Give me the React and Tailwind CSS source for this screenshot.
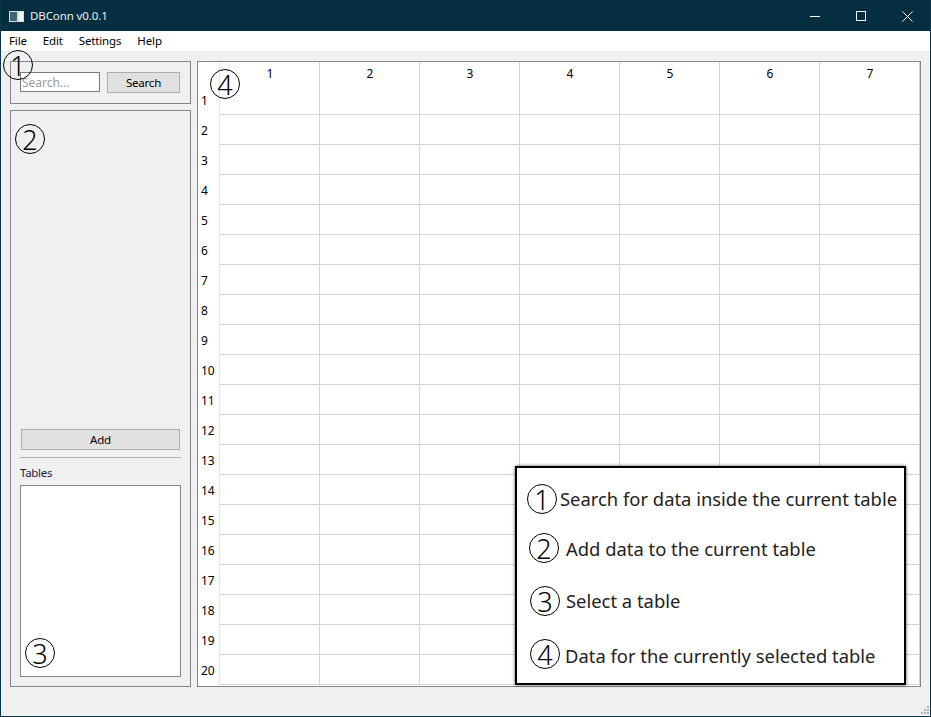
const font = { fontFamily: '"Noto Sans", "Open Sans", sans-serif' };

// Hand-drawn looking numbered circle used for the annotations over the window
function Marker({ className, children }) {
  return (
    <span className={`absolute w-[30px] h-[30px] rounded-full border-[1.5px] border-black flex items-center justify-center text-[27px] leading-none font-light text-black ${className}`}>
      {children}
    </span>
  );
}

function TitleBar() {
  return (
    <div className="h-[30px] flex items-center bg-[#052e40] text-[#e8eef1] shrink-0">
      <svg width="15" height="11" viewBox="0 0 15 11" className="ml-[8px]">
        <rect width="15" height="11" fill="#d8dcdc" />
        <rect x="1" y="1" width="7" height="9" fill="#3d6670" />
        <rect x="10" y="1" width="4" height="9" fill="#f2f2f2" />
      </svg>
      <span className="ml-[6px] text-[11.5px] tracking-[-0.1px]">DBConn v0.0.1</span>
      <div className="ml-auto flex items-center">
        <button className="w-[46px] h-[30px] flex items-center justify-center">
          <svg width="10" height="10" viewBox="0 0 10 10"><path d="M0 5.5H10" stroke="#fff" fill="none" /></svg>
        </button>
        <button className="w-[46px] h-[30px] flex items-center justify-center">
          <svg width="10" height="10" viewBox="0 0 10 10"><rect x="0.5" y="0.5" width="9" height="9" stroke="#fff" fill="none" /></svg>
        </button>
        <button className="w-[46px] h-[30px] flex items-center justify-center">
          <svg width="11" height="11" viewBox="0 0 11 11"><path d="M0.5 0.5L10.5 10.5M10.5 0.5L0.5 10.5" stroke="#fff" fill="none" /></svg>
        </button>
      </div>
    </div>
  );
}

function MenuBar() {
  return (
    <div className="h-[20px] flex items-center bg-white text-[11.5px] leading-[14px] tracking-[-0.15px] text-black shrink-0 pl-[8px] gap-[16px]">
      <span>File</span>
      <span>Edit</span>
      <span>Settings</span>
      <span>Help</span>
    </div>
  );
}

function Sidebar() {
  return (
    <div className="w-[181px] flex flex-col gap-[6px] shrink-0">
      <div className="relative h-[43px] border border-[#85858f] flex items-start pl-[9px] pt-[10px] gap-[7px]">
        <div className="w-[80px] h-[20px] bg-white border border-[#7a7a7a] text-[12px] text-[#9a9a9a] leading-[20px] pl-[1px]">Search...</div>
        <button className="w-[73px] h-[21px] bg-[#e1e1e1] border border-[#adadad] text-[11.5px] tracking-[-0.2px] text-black leading-[20px]">Search</button>
      </div>
      <div className="relative flex-1 border border-[#85858f] flex flex-col justify-end px-[9px] pb-[9px]">
        <button className="w-[159px] h-[21px] ml-[1px] bg-[#e1e1e1] border border-[#adadad] text-[11.5px] tracking-[-0.2px] text-black leading-[20px]">Add</button>
        <div className="h-px bg-[#b4b4b4] mt-[7px] w-[161px]" />
        <div className="text-[11.5px] tracking-[-0.3px] text-[#1a1a3a] mt-[7px] h-[20px] leading-[15px]">Tables</div>
        <div className="h-[192px] w-[161px] bg-white border border-[#85858f]" />
      </div>
    </div>
  );
}

function DataTable() {
  const cols = [1, 2, 3, 4, 5, 6, 7];
  const rows = Array.from({ length: 20 }, (_, i) => i + 1);
  return (
    <div className="relative flex-1 border border-[#85858f] bg-white overflow-hidden text-[12px] text-black">
      <div className="flex h-[23px]">
        <div className="w-[22px] border-r border-[#e6e6e6] shrink-0" />
        {cols.map((c) => (
          <div key={c} className="w-[100px] shrink-0 border-r border-[#d4d4d4] pl-[1px] text-center leading-[24px]">{c}</div>
        ))}
      </div>
      {rows.map((r) => (
        <div key={r} className="flex h-[30px]">
          <div className="w-[22px] shrink-0 border-r border-[#e6e6e6] pl-[3px] leading-[32px]">{r}</div>
          {cols.map((c) => (
            <div key={c} className="w-[100px] shrink-0 border-r border-b border-[#d4d4d4]" />
          ))}
        </div>
      ))}
    </div>
  );
}

function Legend() {
  const items = [
    { mark: "1", text: "Search for data inside the current table", markPos: "left-[10px] top-[16px]", textPos: "left-[43px] top-[14px]" },
    { mark: "2", text: "Add data to the current table", markPos: "left-[12px] top-[65px]", textPos: "left-[49px] top-[64px]" },
    { mark: "3", text: "Select a table", markPos: "left-[13px] top-[118px]", textPos: "left-[49px] top-[116px]" },
    { mark: "4", text: "Data for the currently selected table", markPos: "left-[13px] top-[171px]", textPos: "left-[48px] top-[171px]" },
  ];
  return (
    <div className="absolute left-[514px] top-[466px] w-[391px] h-[219px] bg-white border-2 border-black shadow-[0_0_3px_rgba(0,0,0,0.7)]">
      {items.map((it) => (
        <div key={it.mark}>
          <Marker className={it.markPos}>{it.mark}</Marker>
          <span className={`absolute ${it.textPos} text-[18.4px] leading-[34px] text-[#222] whitespace-nowrap`}>{it.text}</span>
        </div>
      ))}
    </div>
  );
}

export default function App() {
  return (
    <div style={font} className="relative w-[931px] h-[717px] flex flex-col bg-[#f0f0f0] overflow-hidden border border-t-0 border-[#0d3548]">
      <div className="h-px bg-[#052e40] shrink-0" />
      <TitleBar />
      <MenuBar />
      <div className="flex-1 min-h-0 flex gap-[6px] pl-[9px] pr-[9px] pt-[10px] pb-[29px]">
        <Sidebar />
        <DataTable />
      </div>
      <Marker className="left-[2px] top-[50px]">1</Marker>
      <Marker className="left-[14px] top-[124px]">2</Marker>
      <Marker className="left-[24px] top-[638px]">3</Marker>
      <Marker className="left-[209px] top-[69px]">4</Marker>
      <Legend />
      <svg width="10" height="10" viewBox="0 0 10 10" className="absolute right-[0px] bottom-[1px]">
        <g fill="#b5b5b5">
          <rect x="7" y="1" width="2" height="2" />
          <rect x="4" y="4" width="2" height="2" />
          <rect x="7" y="4" width="2" height="2" />
          <rect x="1" y="7" width="2" height="2" />
          <rect x="4" y="7" width="2" height="2" />
          <rect x="7" y="7" width="2" height="2" />
        </g>
      </svg>
    </div>
  );
}
